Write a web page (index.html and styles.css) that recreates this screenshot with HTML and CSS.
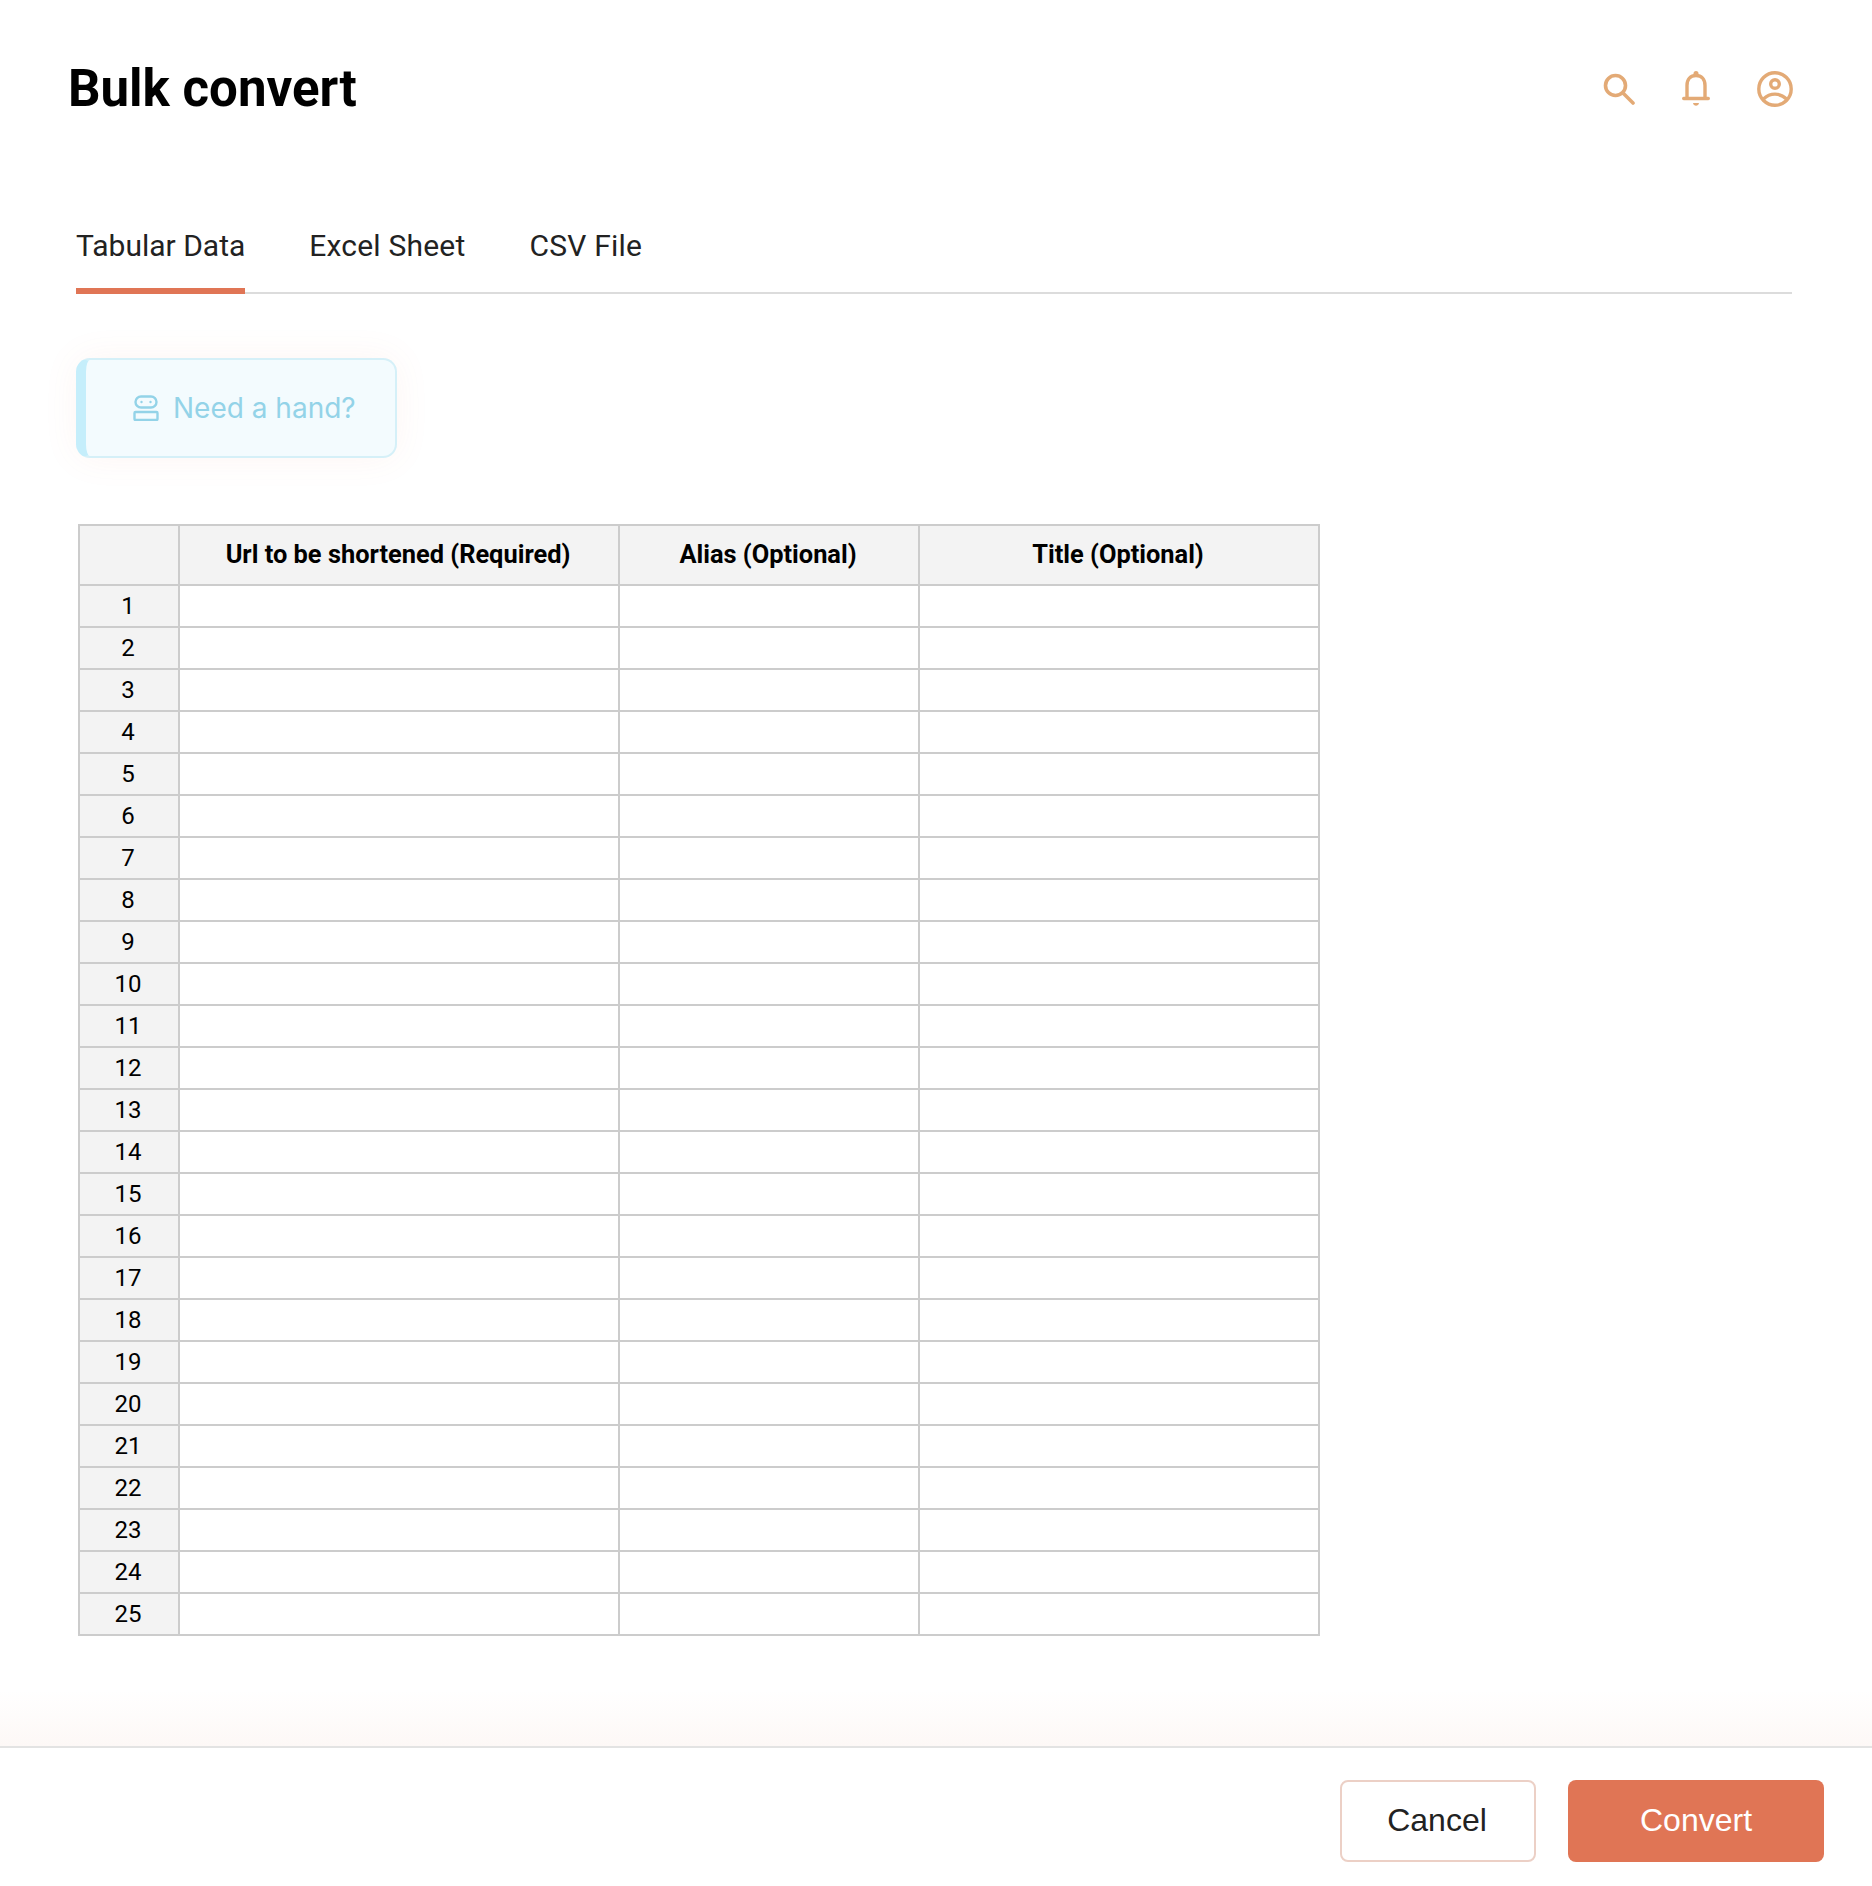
FILE: index.html
```html
<!DOCTYPE html>
<html lang="en">
<head>
    <meta charset="UTF-8">
    <meta name="viewport" content="width=device-width, initial-scale=1.0">
    <title>Bulk convert</title>
    <link rel="stylesheet" href="styles.css">
</head>
<body>

<div class="page">
    <div class="main">
        <div class="topbar">
            <h1>Bulk convert</h1>
            <div class="top-icons">
                <svg width="32" height="32" viewBox="0 0 32 32" fill="none" stroke="#e3aa76" stroke-width="3.6" stroke-linecap="round">
                    <circle cx="12.500" cy="12.500" r="10"/>
                    <line x1="20" y1="20" x2="30" y2="30"/>
                </svg>
                <svg width="28" height="38" viewBox="0 0 28 38" fill="none" stroke="#e3aa76" stroke-width="3.4" stroke-linecap="round">
                    <path d="M5 28V15.500C5 9.500 8.500 5.500 14 5.500S23 9.500 23 15.500V28"/>
                    <line x1="1.700" y1="28.500" x2="26.300" y2="28.500"/>
                    <circle cx="14" cy="3.500" r="2.500" fill="#e3aa76" stroke="none"/>
                    <path d="M11 33H17C16.500 36.500 11.500 36.500 11 33Z" fill="#e3aa76" stroke="none"/>
                </svg>
                <svg width="36" height="36" viewBox="0 0 36 36" fill="none" stroke="#e3aa76" stroke-width="3.4">
                    <circle cx="18" cy="18" r="16.200"/>
                    <circle cx="18" cy="13" r="4.300"/>
                    <path d="M6.500 28C13 21.500 23 21.500 29.500 28"/>
                </svg>
            </div>
        </div>

        <div class="tabs">
            <div class="tab active">Tabular Data</div>
            <div class="tab">Excel Sheet</div>
            <div class="tab">CSV File</div>
        </div>

        <button class="help-btn">
            <svg width="26" height="26" viewBox="0 0 26 26" fill="none" stroke="#93d3e8" stroke-width="2.400">
                <rect x="2.500" y="1.500" width="21" height="11" rx="5.500"/>
                <rect x="1.500" y="17" width="23" height="8" rx="1"/>
                <circle cx="8.500" cy="7" r="1.200" fill="#93d3e8" stroke="none"/>
                <circle cx="17.500" cy="7" r="1.200" fill="#93d3e8" stroke="none"/>
            </svg>
            <span>Need a hand?</span>
        </button>

        <table class="sheet">
            <colgroup>
                <col class="col-num">
                <col class="col-url">
                <col class="col-alias">
                <col class="col-title">
            </colgroup>
            <thead>
                <tr><th></th><th>Url to be shortened (Required)</th><th>Alias (Optional)</th><th>Title (Optional)</th></tr>
            </thead>
            <tbody>
                <tr><th>1</th><td></td><td></td><td></td></tr>
                <tr><th>2</th><td></td><td></td><td></td></tr>
                <tr><th>3</th><td></td><td></td><td></td></tr>
                <tr><th>4</th><td></td><td></td><td></td></tr>
                <tr><th>5</th><td></td><td></td><td></td></tr>
                <tr><th>6</th><td></td><td></td><td></td></tr>
                <tr><th>7</th><td></td><td></td><td></td></tr>
                <tr><th>8</th><td></td><td></td><td></td></tr>
                <tr><th>9</th><td></td><td></td><td></td></tr>
                <tr><th>10</th><td></td><td></td><td></td></tr>
                <tr><th>11</th><td></td><td></td><td></td></tr>
                <tr><th>12</th><td></td><td></td><td></td></tr>
                <tr><th>13</th><td></td><td></td><td></td></tr>
                <tr><th>14</th><td></td><td></td><td></td></tr>
                <tr><th>15</th><td></td><td></td><td></td></tr>
                <tr><th>16</th><td></td><td></td><td></td></tr>
                <tr><th>17</th><td></td><td></td><td></td></tr>
                <tr><th>18</th><td></td><td></td><td></td></tr>
                <tr><th>19</th><td></td><td></td><td></td></tr>
                <tr><th>20</th><td></td><td></td><td></td></tr>
                <tr><th>21</th><td></td><td></td><td></td></tr>
                <tr><th>22</th><td></td><td></td><td></td></tr>
                <tr><th>23</th><td></td><td></td><td></td></tr>
                <tr><th>24</th><td></td><td></td><td></td></tr>
                <tr><th>25</th><td></td><td></td><td></td></tr>
            </tbody>
        </table>
    </div>

    <div class="footer">
        <button class="btn btn-cancel">Cancel</button>
        <button class="btn btn-convert">Convert</button>
    </div>
</div>

</body>
</html>
```

FILE: styles.css
```css
* {
    box-sizing: border-box;
}

body {
    margin: 0;
    background-color: #fff;
    font-family: Roboto, sans-serif;
    color: #000;
}

.page {
    height: 1886px;
    display: flex;
    flex-direction: column;
}

.main {
    flex: 1;
    padding: 60px 80px 0 69px;
    background: linear-gradient(to bottom, #fff 1690px, #fdf8f6 1746px);
}

.topbar {
    display: flex;
    justify-content: space-between;
    align-items: center;
    height: 56px;
}

h1 {
    margin: 1px 0 0 -1px;
    font-size: 51px;
    font-weight: 700;
    line-height: 56px;
}

.top-icons {
    display: flex;
    align-items: center;
    gap: 47px;
    margin: 1px -1px 0 0;
}

.tabs {
    display: flex;
    gap: 64px;
    margin: 100px 0 0 7px;
    height: 78px;
    border-bottom: 2px solid #dcdcdc;
}

.tab {
    height: 78px;
    padding-top: 12px;
    font-size: 30px;
    line-height: 36px;
    letter-spacing: 0.2px;
    color: #222;
}

.tab.active {
    letter-spacing: 0;
    border-bottom: 6px solid #e07555;
}

.help-btn {
    display: flex;
    align-items: center;
    gap: 14px;
    width: 321px;
    height: 100px;
    margin: 64px 0 0 7px;
    padding: 0 0 0 47px;
    background-color: #f3fbfe;
    border: 2px solid #d5f0f8;
    border-left: 10px solid #c5eefb;
    border-radius: 14px;
    box-shadow: 0 0 36px rgba(226, 118, 85, 0.07);
    font-family: Inter, sans-serif;
    font-size: 28px;
    color: #93d3e8;
}

.sheet {
    margin: 66px 0 0 9px;
    width: 1242px;
    table-layout: fixed;
    border-collapse: collapse;
    border: 2px solid #ccc;
}

.col-num {
    width: 100px;
}

.col-url {
    width: 440px;
}

.col-alias {
    width: 300px;
}

.sheet th,
.sheet td {
    border: 2px solid #ccc;
    padding: 0;
    height: 42px;
    text-align: center;
}

.sheet th {
    background-color: #f3f3f3;
    font-size: 24px;
}

.sheet thead th {
    height: 60px;
    padding: 0 2px 3px 0;
    font-size: 25.400px;
    font-weight: 700;
}

.sheet tbody th {
    padding: 0 2px 1px 0;
    font-weight: 400;
}

.footer {
    height: 140px;
    display: flex;
    justify-content: flex-end;
    gap: 32px;
    padding: 32px 48px 0 0;
    border-top: 2px solid #e3e3e3;
    background-color: #fff;
}

.btn {
    height: 82px;
    padding: 0 0 2px;
    border-radius: 8px;
    font-family: "Liberation Sans", Arial, sans-serif;
    font-size: 32px;
}

.btn-cancel {
    width: 196px;
    padding-right: 2px;
    background-color: #fff;
    border: 2px solid #ecd0c6;
    color: #222;
}

.btn-convert {
    width: 256px;
    background-color: #e07555;
    border: none;
    color: #fff;
}
```
